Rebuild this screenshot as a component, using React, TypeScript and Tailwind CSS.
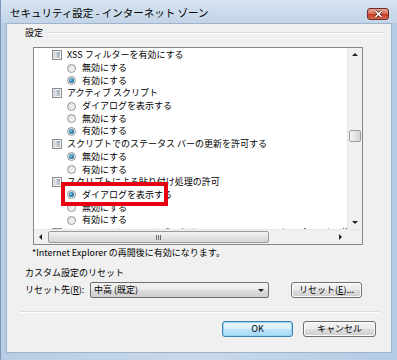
import React from "react";

type Row = { t: "cat" | "r"; s: string; on?: boolean };

const rows: Row[] = [
  { t: "cat", s: "XSS フィルターを有効にする" },
  { t: "r", s: "無効にする" },
  { t: "r", s: "有効にする", on: true },
  { t: "cat", s: "アクティブ スクリプト" },
  { t: "r", s: "ダイアログを表示する" },
  { t: "r", s: "無効にする" },
  { t: "r", s: "有効にする", on: true },
  { t: "cat", s: "スクリプトでのステータス バーの更新を許可する" },
  { t: "r", s: "無効にする", on: true },
  { t: "r", s: "有効にする" },
  { t: "cat", s: "スクリプトによる貼り付け処理の許可" },
  { t: "r", s: "ダイアログを表示する", on: true },
  { t: "r", s: "無効にする" },
  { t: "r", s: "有効にする" },
  { t: "cat", s: "Internet Explorer Web ブラウザー コントロールのスクリプトによる操作を許可する" },
];

function CatIcon() {
  return (
    <svg width="10" height="10" viewBox="0 0 10 10" className="shrink-0">
      <rect x="0.5" y="0.5" width="9" height="9" fill="#f6f6f6" stroke="#8c8c8c" />
      <rect x="1.5" y="1.5" width="2" height="7" fill="#c9d2dc" />
      <line x1="4.5" y1="3" x2="8" y2="3" stroke="#4f6f93" />
      <line x1="4.5" y1="5" x2="8" y2="5" stroke="#7d8da0" />
      <line x1="4.5" y1="7" x2="8" y2="7" stroke="#7d8da0" />
    </svg>
  );
}

function Radio({ on }: { on?: boolean }) {
  return (
    <div className="w-[9px] h-[9px] rounded-full border border-[#8f969d] bg-gradient-to-br from-[#dcdcdc] to-[#fbfbfb] flex items-center justify-center shrink-0">
      {on && (
        <div className="w-[5px] h-[5px] rounded-full bg-[radial-gradient(circle_at_40%_40%,#8fd0ef_0%,#2f7fb0_45%,#154c73_100%)]" />
      )}
    </div>
  );
}

function Up() {
  return <div className="w-0 h-0 border-l-[3px] border-r-[3px] border-b-[3px] border-l-transparent border-r-transparent border-b-[#222]" />;
}
function Down() {
  return <div className="w-0 h-0 border-l-[3px] border-r-[3px] border-t-[3px] border-l-transparent border-r-transparent border-t-[#222]" />;
}
function Left() {
  return <div className="w-0 h-0 border-t-[3px] border-b-[3px] border-r-[3px] border-t-transparent border-b-transparent border-r-[#222]" />;
}
function Right() {
  return <div className="w-0 h-0 border-t-[3px] border-b-[3px] border-l-[3px] border-t-transparent border-b-transparent border-l-[#222]" />;
}

function Btn({ children, def, w }: { children: React.ReactNode; def?: boolean; w: string }) {
  return (
    <div
      className={
        "h-[16px] rounded-[3px] border flex items-center justify-center text-[9px] text-black " +
        w +
        (def
          ? " border-[#3c7fb1] bg-[linear-gradient(#eaf6fd_0%,#d9f0fc_50%,#bee6fd_50%,#a7d9f5_100%)] shadow-[inset_0_0_0_1px_#97d6f5]"
          : " border-[#707070] bg-[linear-gradient(#f2f2f2_0%,#ebebeb_50%,#dddddd_50%,#cfcfcf_100%)] shadow-[inset_0_0_0_1px_#fcfcfc]")
      }
    >
      {children}
    </div>
  );
}

export default function App() {
  return (
    <div className="w-[397px] h-[360px] bg-[linear-gradient(90deg,#b8cde3_0%,#c9d9ea_50%,#b3cbe5_100%)] flex flex-col overflow-hidden font-['Noto_Sans_CJK_JP',sans-serif] border-l border-[#7c97b5]">
      {/* title bar */}
      <div className="h-[23px] shrink-0 flex items-start justify-between pl-[9px] pr-[8px] bg-[linear-gradient(#d6e3f0,#c3d5e8)]">
        <div className="text-[10.5px] leading-[14px] mt-[6px] text-black">
          セキュリティ設定 - インターネット ゾーン
        </div>
        <div className="mt-[8px] w-[22px] h-[12px] rounded-[3px] border border-[#6e2b27] bg-[linear-gradient(#e8a597_0%,#d6715f_45%,#c43b25_55%,#d8684e_100%)] flex items-center justify-center">
          <svg width="9" height="8" viewBox="0 0 9 8">
            <path d="M1.5 1 L7.5 7 M7.5 1 L1.5 7" stroke="#5a1f19" strokeWidth="3" />
            <path d="M1.5 1 L7.5 7 M7.5 1 L1.5 7" stroke="#ffffff" strokeWidth="1.6" />
          </svg>
        </div>
      </div>

      {/* client area */}
      <div className="flex-1 mx-[5px] mb-[7px] bg-[#f0f0f0] border border-[#9fb4cb] flex flex-col text-[9px] text-black">
        {/* group header */}
        <div className="mt-[2px] h-[14px] flex items-center pl-[18px] pr-[5px] gap-[4px]">
          <span className="leading-[14px]">設定</span>
          <div className="flex-1 h-[2px] border-t border-[#d5dfe5] border-b border-b-white" />
        </div>

        {/* listbox */}
        <div className="relative mt-[7px] ml-[26px] w-[330px] h-[198px] border border-[#828790] bg-white flex flex-col">
          <div className="flex flex-1 min-h-0">
            <div className="flex-1 overflow-hidden pt-[1px]">
              {rows.map((r, i) =>
                r.t === "cat" ? (
                  <div key={i} className="h-[12.7px] flex items-center pl-[18px] gap-[5px] whitespace-nowrap">
                    <CatIcon />
                    <span className="leading-[12px]">{r.s}</span>
                  </div>
                ) : (
                  <div key={i} className="h-[12.7px] flex items-center pl-[33px] gap-[6px] whitespace-nowrap">
                    <Radio on={r.on} />
                    <span className="leading-[12px]">{r.s}</span>
                  </div>
                )
              )}
            </div>
            {/* vertical scrollbar */}
            <div className="w-[15px] bg-[#f0f0f0] border-l border-[#e6e6e6] flex flex-col items-center">
              <div className="h-[13px] flex items-center justify-center">
                <Up />
              </div>
              <div className="mt-[69px] w-[12px] h-[12px] rounded-[2px] border border-[#9a9a9a] bg-[linear-gradient(90deg,#f3f3f3,#e2e2e2_50%,#d6d6d6)]" />
              <div className="flex-1" />
              <div className="h-[13px] flex items-center justify-center">
                <Down />
              </div>
            </div>
          </div>
          {/* horizontal scrollbar */}
          <div className="h-[15px] flex bg-[#f0f0f0] border-t border-[#e6e6e6]">
            <div className="w-[13px] flex items-center justify-center">
              <Left />
            </div>
            <div className="ml-[1px] mt-[1px] w-[221px] h-[12px] rounded-[2px] border border-[#9a9a9a] bg-[linear-gradient(#f3f3f3,#e4e4e4_50%,#d5d5d5)] flex items-center justify-center gap-[1px]">
              <div className="w-[1px] h-[5px] bg-[#6d6d6d]" />
              <div className="w-[1px] h-[5px] bg-[#6d6d6d]" />
              <div className="w-[1px] h-[5px] bg-[#6d6d6d]" />
            </div>
            <div className="flex-1 flex items-center justify-end pr-[5px]">
              <Right />
            </div>
            <div className="w-[15px] bg-[#f0f0f0]" />
          </div>

          {/* red highlight */}
          <div className="absolute left-[27px] top-[134px] w-[107px] h-[24px] border-[4px] border-[#e60012]" />
        </div>

        {/* note */}
        <div className="mt-[1px] pl-[25px] h-[14px] leading-[14px]">
          *Internet Explorer の再開後に有効になります。
        </div>

        {/* reset section */}
        <div className="mt-[6px] pl-[18px] h-[14px] leading-[14px]">カスタム設定のリセット</div>
        <div className="mt-[2px] flex items-center pl-[18px]">
          <div className="w-[65px] leading-[14px]">
            リセット先(<span className="underline">R</span>):
          </div>
          <div className="w-[179px] h-[16px] rounded-[2px] border border-[#707070] bg-[linear-gradient(#f2f2f2_0%,#ebebeb_50%,#dddddd_50%,#cfcfcf_100%)] flex items-center justify-between pl-[3px] pr-[4px]">
            <span className="leading-[12px]">中高 (既定)</span>
            <Down />
          </div>
          <div className="ml-[22px]">
            <Btn w="w-[71px]">
              リセット(<span className="underline">E</span>)...
            </Btn>
          </div>
        </div>

        {/* separator */}
        <div className="mt-[13px] ml-[13px] mr-[12px] h-[2px] border-t border-[#d5dfe5] border-b border-b-white" />

        {/* buttons */}
        <div className="mt-[8px] flex justify-end pr-[15px] gap-[10px]">
          <Btn def w="w-[71px]">OK</Btn>
          <Btn w="w-[73px]">キャンセル</Btn>
        </div>
      </div>
    </div>
  );
}
